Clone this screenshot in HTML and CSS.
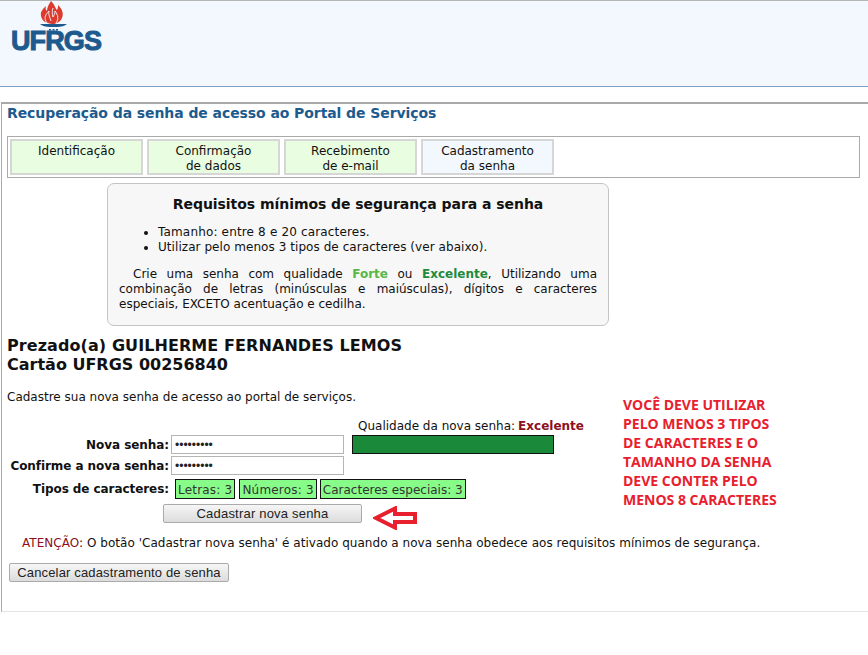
FILE: index.html

```html
<!DOCTYPE html>
<html lang="pt-BR">
<head>
    <meta charset="UTF-8">
    <title>Recuperação da senha</title>
    <link rel="stylesheet" href="styles.css">
</head>
<body>
    <div class="header">
        <svg class="logo-flame" width="28" height="30" viewBox="0 0 28 30">
            <path fill="#dc3a2e" d="M11 0C15 4 15 7 17 9C18 7 18 6 18 4C22 8 24 12 22 17C21 20 18 22 14 23C8 23 2 21 1 15C0 10 4 7 6 5C5 8 6 9 7 10C7 6 9 3 11 0Z"/>
            <path fill="none" stroke="#f2f8fd" stroke-width="0.900" d="M7 22C3 17 6 13 9 10C8 14 10 16 11 20M16 22C19 18 18 14 15 10C15 13 14 14 13 16C12 13 12 10 13 7"/>
            <path fill="#1d5a8e" d="M0 23H27C25 25 21 26 17 26H10C6 26 2 25 0 23Z"/>
            <path fill="#1d5a8e" d="M9 28h2v1.500h-2zM12.500 28h2v1.500h-2zM16 28h2v1.500h-2z"/>
        </svg>
        <div class="logo-text">UFRGS</div>
    </div>

    <div class="main">
        <h1 class="page-title">Recuperação da senha de acesso ao Portal de Serviços</h1>

        <div class="steps">
            <div class="step">Identificação</div>
            <div class="step">Confirmação<br>de dados</div>
            <div class="step">Recebimento<br>de e-mail</div>
            <div class="step current">Cadastramento<br>da senha</div>
        </div>

        <div class="req-box">
            <h2 class="req-title">Requisitos mínimos de segurança para a senha</h2>
            <ul class="req-list">
                <li>Tamanho: entre 8 e 20 caracteres.</li>
                <li>Utilizar pelo menos 3 tipos de caracteres (ver abaixo).</li>
            </ul>
            <p class="req-text">Crie uma senha com qualidade <b class="forte">Forte</b> ou <b class="excelente">Excelente</b>, Utilizando uma combinação de letras (minúsculas e maiúsculas), dígitos e caracteres especiais, EXCETO acentuação e cedilha.</p>
        </div>

        <div class="user-name"><span class="user-first">Prezado(a) GUILHERME FERNANDES LEMOS</span><br>Cartão UFRGS 00256840</div>
        <p class="intro">Cadastre sua nova senha de acesso ao portal de serviços.</p>

        <div class="form">
            <div class="quality-row">
                <span>Qualidade da nova senha:</span>
                <b class="quality-value">Excelente</b>
            </div>
            <div class="form-row">
                <label class="form-label">Nova senha:</label>
                <input class="pass" type="text" value="•••••••••">
                <div class="quality-bar"></div>
            </div>
            <div class="form-row">
                <label class="form-label">Confirme a nova senha:</label>
                <input class="pass" type="text" value="•••••••••">
            </div>
            <div class="form-row types-row">
                <label class="form-label">Tipos de caracteres:</label>
                <span class="type-tag">Letras: 3</span>
                <span class="type-tag">Números: 3</span>
                <span class="type-tag">Caracteres especiais: 3</span>
            </div>
            <button class="btn btn-save">Cadastrar nova senha</button>
        </div>

        <p class="warning"><span class="warning-word">ATENÇÃO</span>: O botão 'Cadastrar nova senha' é ativado quando a nova senha obedece aos requisitos mínimos de segurança.</p>
        <button class="btn btn-cancel">Cancelar cadastramento de senha</button>

        <svg class="arrow" width="44" height="24" viewBox="0 0 44 24">
            <path fill="none" stroke="#e8202e" stroke-width="4" d="M3 12L22 2.500V8H42V16H22V21.500Z"/>
        </svg>
        <div class="note">VOCÊ DEVE UTILIZAR<br>PELO MENOS 3 TIPOS<br>DE CARACTERES E O<br>TAMANHO DA SENHA<br>DEVE CONTER PELO<br>MENOS 8 CARACTERES</div>
    </div>
</body>
</html>
```

FILE: styles.css

```css
body {
    margin: 0;
    font-family: "DejaVu Sans", Verdana, sans-serif;
    font-size: 12px;
    color: #111;
    background-color: #fff;
}
.header {
    height: 85px;
    background-color: #f2f8fd;
    border-top: 1px solid #b5b5b5;
    border-bottom: 1px solid #7f9fc4;
}
.logo-flame {
    display: block;
    margin-left: 40px;
}
.logo-text {
    margin-left: 11px;
    font-family: "Liberation Sans", Arial, sans-serif;
    font-weight: bold;
    font-size: 27px;
    line-height: 20px;
    color: #1d5a8e;
    letter-spacing: -0.9px;
    -webkit-text-stroke: 1px #1d5a8e;
}
.main {
    position: relative;
    margin: 15px 0 0 1px;
    height: 507px;
    border-top: 2px solid #a9a9a9;
    border-left: 1px solid #a9a9a9;
    border-bottom: 1px solid #e3e3e3;
}
.page-title {
    margin: 0;
    padding-left: 5px;
    font-size: 14px;
    line-height: 18px;
    font-weight: bold;
    color: #1d5a8e;
    letter-spacing: -0.08px;
}
.steps {
    display: flex;
    gap: 4px;
    margin: 14px 8px 0 5px;
    padding: 2px;
    border: 1px solid #aaa;
    height: 36px;
}
.step {
    box-sizing: border-box;
    width: 133px;
    height: 36px;
    padding-top: 3px;
    border: 2px solid #d6d6d6;
    text-align: center;
    line-height: 15px;
    background-color: #e9fde1;
}
.step.current {
    background-color: #f2f8fd;
}
.req-box {
    box-sizing: border-box;
    width: 502px;
    height: 143px;
    margin: 5px 0 0 105px;
    padding: 12px 11px 0 11px;
    background-color: #f7f7f7;
    border: 1px solid #c4c4c4;
    border-radius: 7px;
}
.req-title {
    margin: 0;
    font-size: 14px;
    line-height: 17px;
    text-align: center;
    letter-spacing: -0.05px;
}
.req-list {
    margin: 12px 0 0 0;
    padding-left: 39px;
    line-height: 15px;
}
.req-list li:first-child {
    letter-spacing: 0.16px;
}
.req-list li:last-child {
    letter-spacing: 0.06px;
}
.req-text {
    margin: 12px 0 0 0;
    line-height: 15px;
    text-align: justify;
    text-indent: 14px;
}
.forte {
    color: #55b848;
}
.excelente {
    color: #1e8b3c;
}
.user-name {
    margin: 10px 0 0 5px;
    font-size: 16px;
    line-height: 19px;
    font-weight: bold;
}
.user-first {
    letter-spacing: 0.08px;
}
.intro {
    margin: 16px 0 0 5px;
    line-height: 15px;
}
.form {
    margin-top: 14px;
}
.quality-row {
    margin-left: 356px;
    line-height: 14px;
    display: flex;
    gap: 3px;
}
.quality-value {
    color: #8b1020;
}
.form-row {
    display: flex;
    align-items: center;
    margin-top: 2px;
}
.form-label {
    width: 167px;
    text-align: right;
    font-weight: bold;
    flex-shrink: 0;
    letter-spacing: -0.07px;
}
.pass {
    box-sizing: border-box;
    width: 173px;
    height: 19px;
    margin: 0 0 0 2px;
    padding: 0 3px;
    border: 1px solid #b5b5b5;
    font-family: "Liberation Sans", Arial, sans-serif;
    font-size: 12px;
    color: #222;
}
.quality-bar {
    box-sizing: border-box;
    width: 202px;
    height: 19px;
    margin-left: 8px;
    background-color: #1a8a3a;
    border: 1px solid #111;
}
.types-row {
    margin-top: 4px;
}
.type-tag {
    margin-left: 4px;
    padding: 0 2px;
    height: 18px;
    line-height: 20px;
    background-color: #88fc88;
    border: 1px solid #111;
    color: #333;
    letter-spacing: 0.2px;
}
.type-tag:first-of-type {
    margin-left: 6px;
}
.type-tag:last-child {
    margin-left: 3px;
    letter-spacing: 0;
}
.btn {
    display: block;
    box-sizing: border-box;
    height: 19px;
    padding: 0;
    font-family: "Liberation Sans", Arial, sans-serif;
    font-size: 13px;
    color: #222;
    background: linear-gradient(#f6f6f6, #dcdcdc);
    border: 1px solid #aaa;
    border-radius: 2px;
}
.btn-save {
    width: 199px;
    margin: 5px 0 0 161px;
    letter-spacing: 0.2px;
}
.warning {
    margin: 13px 0 0 20px;
    line-height: 15px;
    letter-spacing: 0.035px;
}
.warning-word {
    color: #8b1020;
}
.btn-cancel {
    width: 220px;
    margin: 12px 0 0 7px;
    letter-spacing: 0.15px;
}
.arrow {
    position: absolute;
    left: 371px;
    top: 402px;
}
.note {
    position: absolute;
    left: 621px;
    top: 291px;
    font-family: "Open Sans", sans-serif;
    font-weight: bold;
    font-size: 14px;
    line-height: 19px;
    color: #e8202e;
}
```
